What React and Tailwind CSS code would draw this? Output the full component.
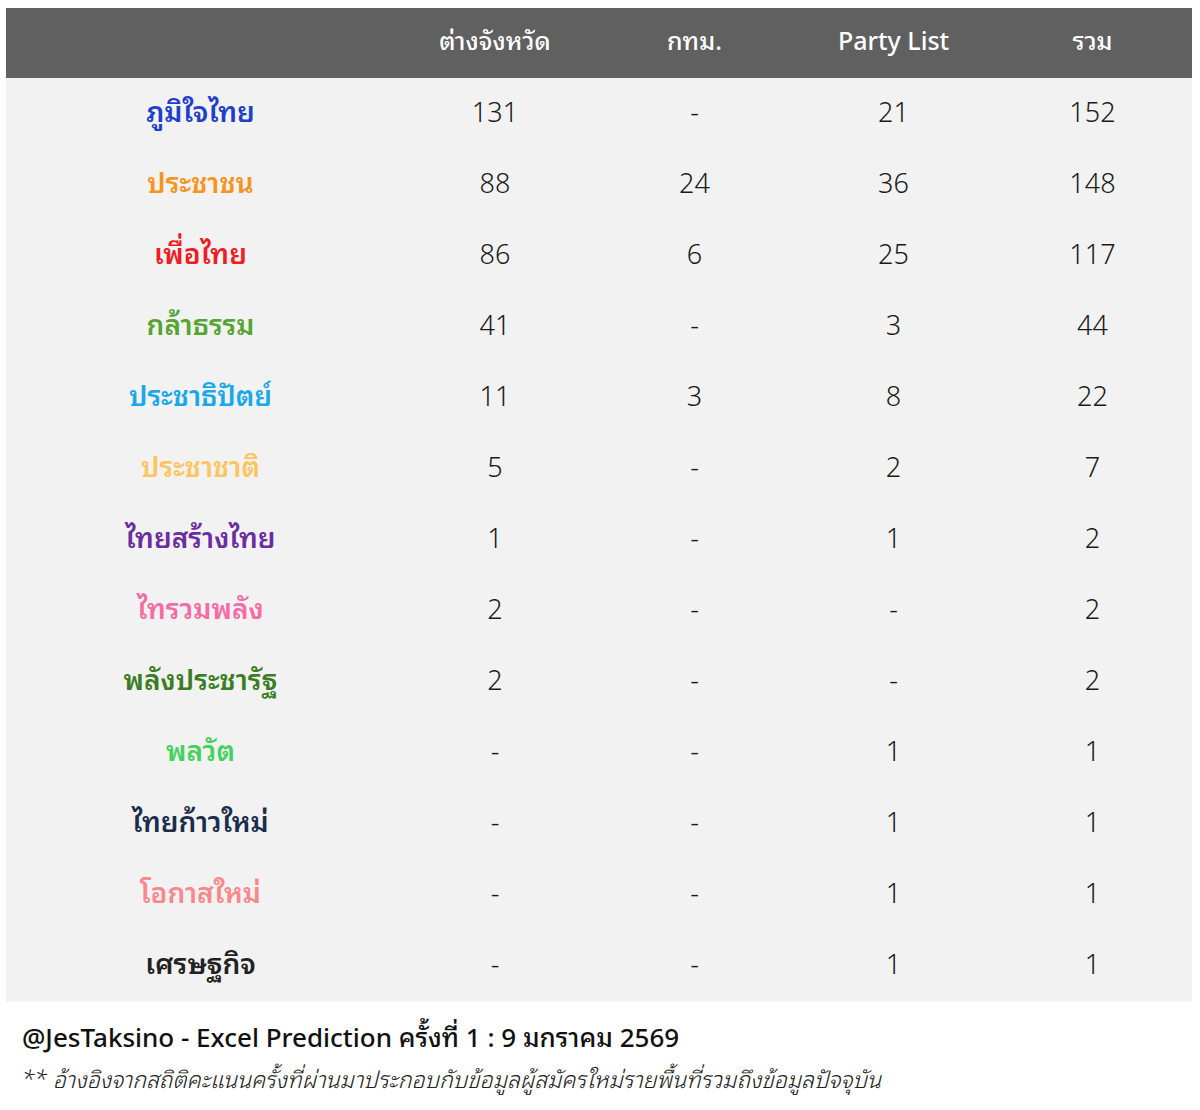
const rows = [
  { name: "ภูมิใจไทย", color: "text-[#1e40c8]", v: ["131", "-", "21", "152"] },
  { name: "ประชาชน", color: "text-[#f7941d]", v: ["88", "24", "36", "148"] },
  { name: "เพื่อไทย", color: "text-[#ee1c25]", v: ["86", "6", "25", "117"] },
  { name: "กล้าธรรม", color: "text-[#55a532]", v: ["41", "-", "3", "44"] },
  { name: "ประชาธิปัตย์", color: "text-[#1ba8e8]", v: ["11", "3", "8", "22"] },
  { name: "ประชาชาติ", color: "text-[#fcc55f]", v: ["5", "-", "2", "7"] },
  { name: "ไทยสร้างไทย", color: "text-[#6a2ea0]", v: ["1", "-", "1", "2"] },
  { name: "ไทรวมพลัง", color: "text-[#f56ca5]", v: ["2", "-", "-", "2"] },
  { name: "พลังประชารัฐ", color: "text-[#3b7d23]", v: ["2", "-", "-", "2"] },
  { name: "พลวัต", color: "text-[#45d15e]", v: ["-", "-", "1", "1"] },
  { name: "ไทยก้าวใหม่", color: "text-[#1a2e4c]", v: ["-", "-", "1", "1"] },
  { name: "โอกาสใหม่", color: "text-[#f8888a]", v: ["-", "-", "1", "1"] },
  { name: "เศรษฐกิจ", color: "text-[#222222]", v: ["-", "-", "1", "1"] },
];

const cols = "grid grid-cols-[389px_200px_199px_199px_199px]";

export default function App() {
  return (
    <div className="w-[1200px] h-[1110px] bg-white pt-2 px-[6px] font-['Noto_Sans','Noto_Sans_Thai_Looped','Loma','Garuda','Noto_Sans_Thai',sans-serif]">
      <div className="w-[1186px]">
        <div className={`${cols} h-[70px] items-center bg-[#606060] text-white text-[25px] font-medium pb-1`}>
          <div></div>
          <div className="text-center">ต่างจังหวัด</div>
          <div className="text-center">กทม.</div>
          <div className="text-center">Party List</div>
          <div className="text-center">รวม</div>
        </div>
        <div className="bg-[#f2f2f2] pb-px">
          {rows.map((r) => (
            <div key={r.name} className={`${cols} h-[71px] items-center`}>
              <div className={`text-center font-semibold text-[28px] pb-[6px] ${r.color}`}>{r.name}</div>
              {r.v.map((x, i) => (
                <div key={i} className="text-center text-[27px] font-light text-[#1a1a1a] pb-[2px]">{x}</div>
              ))}
            </div>
          ))}
        </div>
      </div>
      <div className="pl-4 pt-[17px]">
        <div className="text-[26px] font-medium text-[#111] leading-[36px]">@JesTaksino - Excel Prediction ครั้งที่ 1 : 9 มกราคม 2569</div>
        <div className="text-[23px] italic font-light text-[#222] leading-[36px] mt-[6px]">** อ้างอิงจากสถิติคะแนนครั้งที่ผ่านมาประกอบกับข้อมูลผู้สมัครใหม่รายพื้นที่รวมถึงข้อมูลปัจจุบัน</div>
      </div>
    </div>
  );
}
